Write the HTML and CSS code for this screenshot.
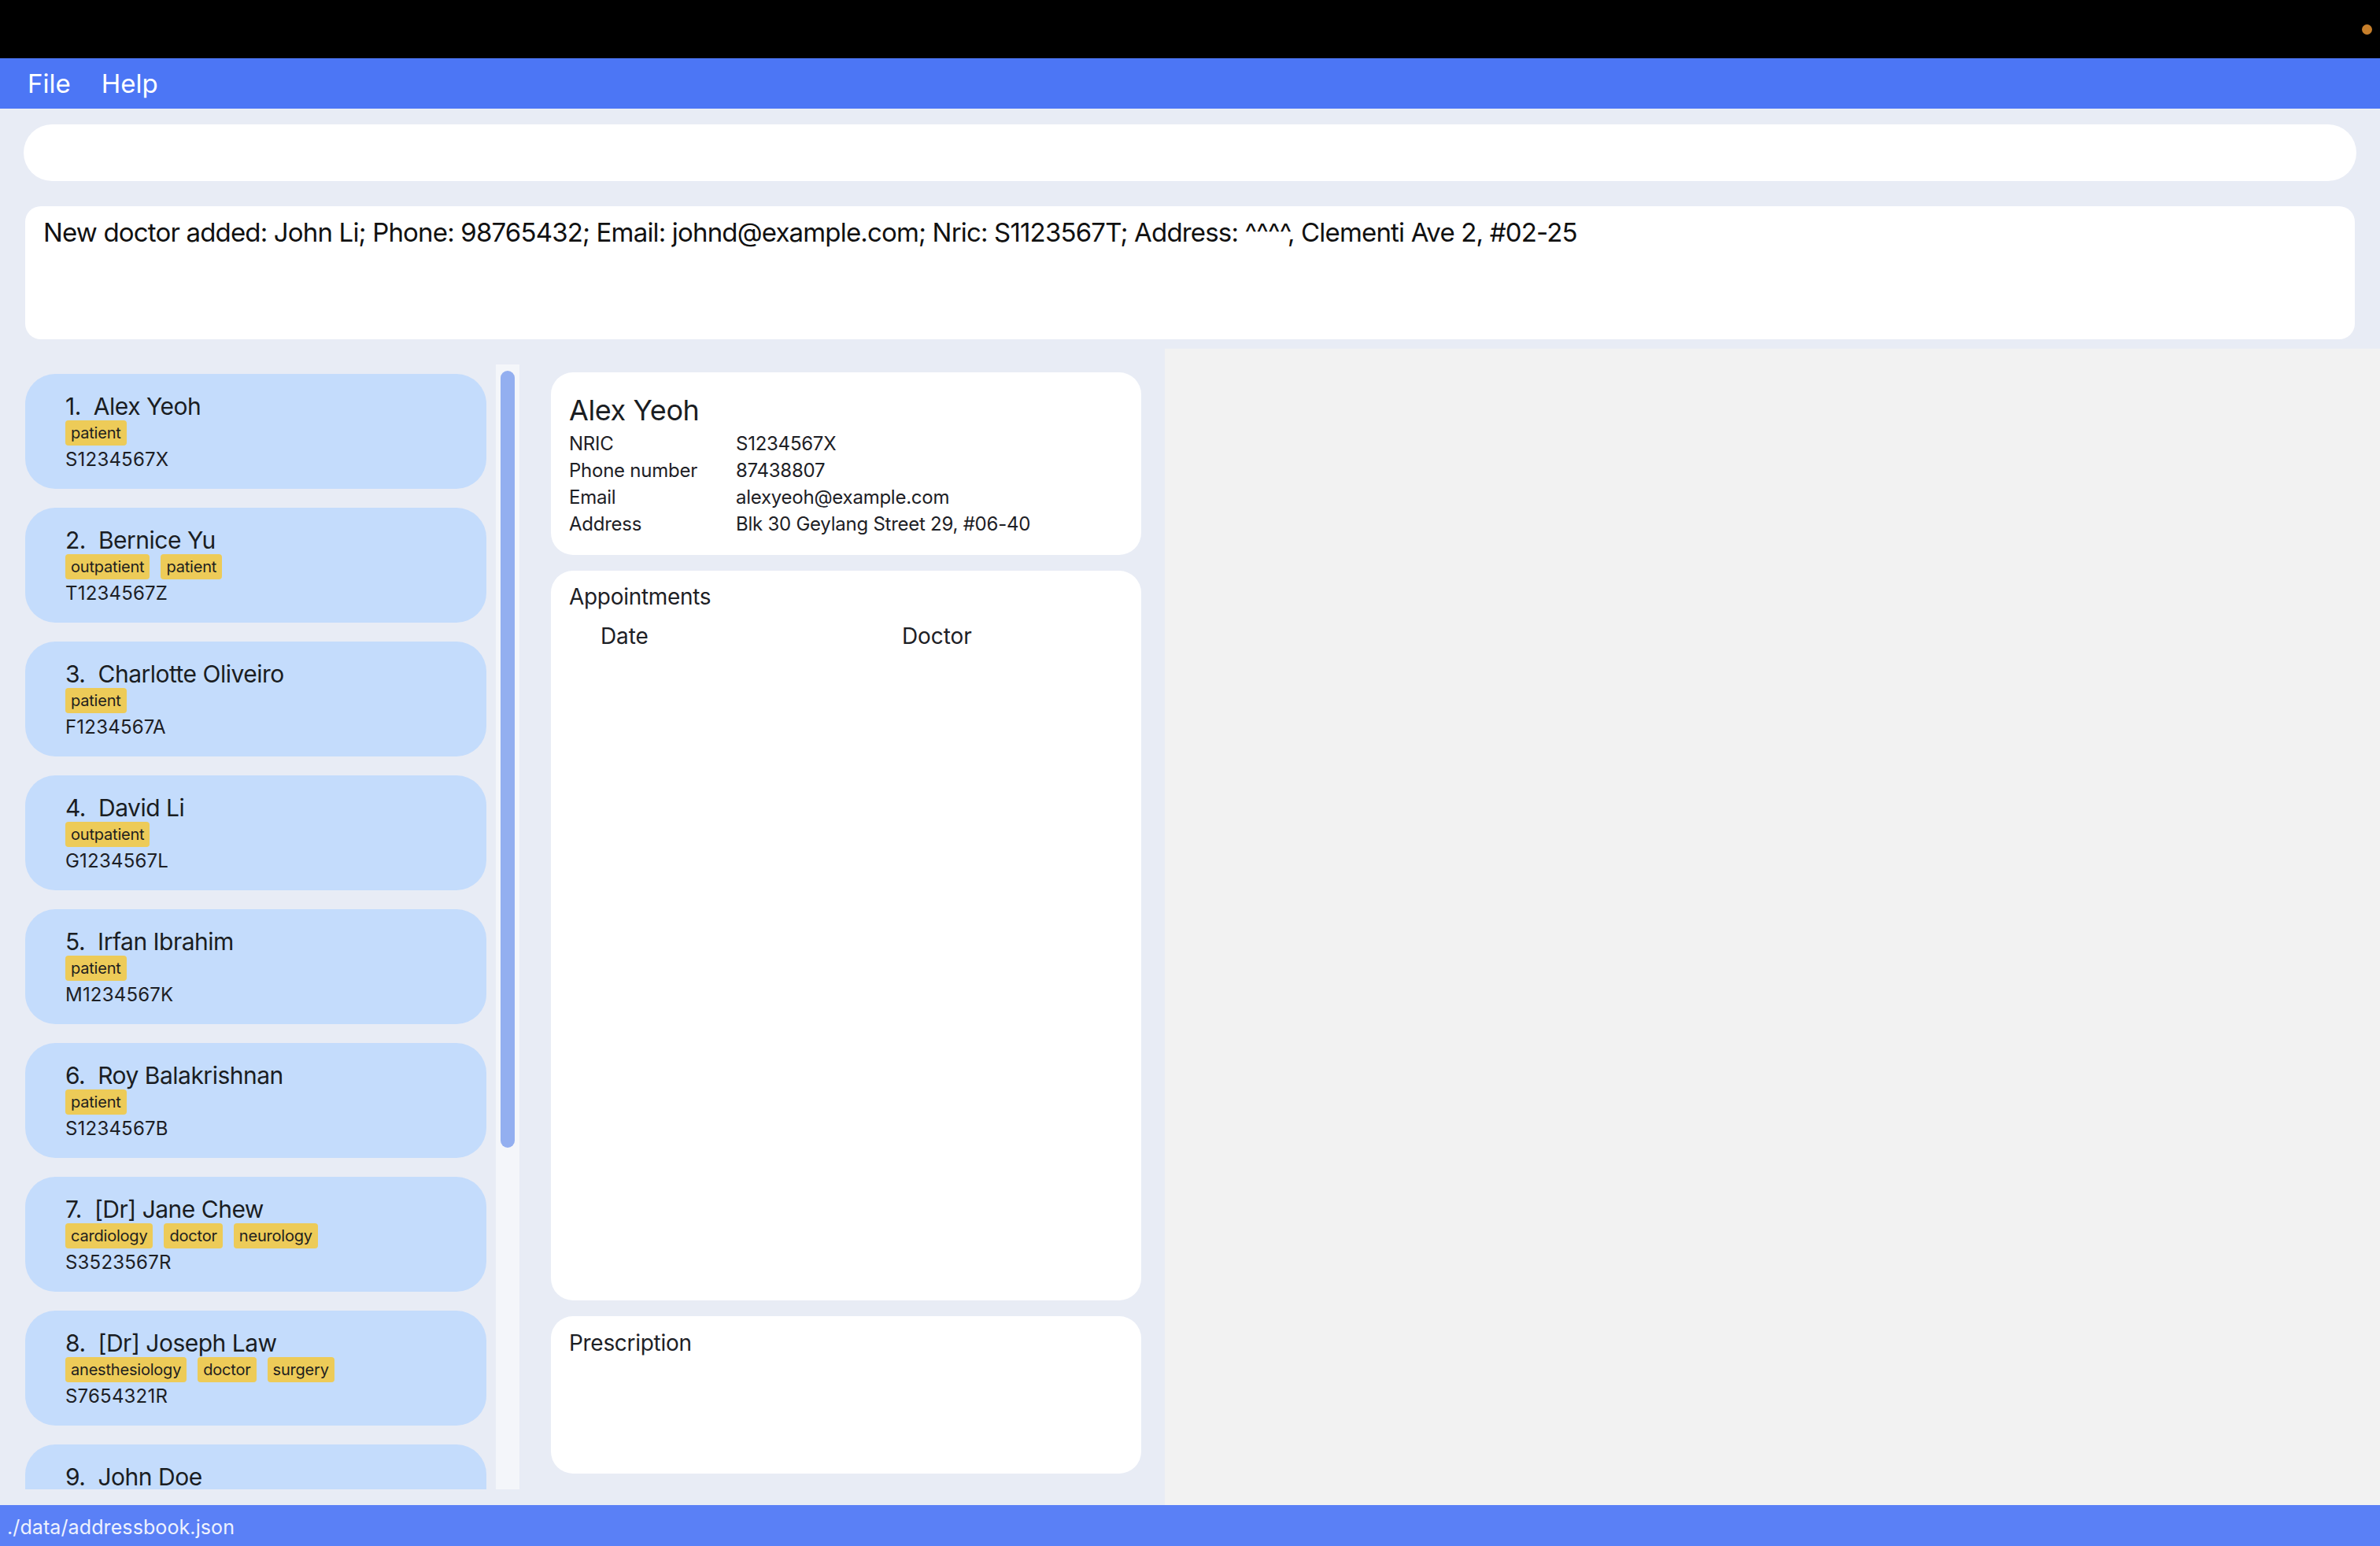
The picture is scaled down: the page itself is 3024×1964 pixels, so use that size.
FILE: index.html
```html
<!DOCTYPE html>
<html lang="en">
<head>
<meta charset="utf-8">
<title>Clinic address book</title>
<link rel="stylesheet" href="styles.css">
</head>
<body>
<div class="app">
  <div class="titlebar"><span class="dot"></span></div>
  <nav class="menubar">
    <span class="menu-item">File</span>
    <span class="menu-item">Help</span>
  </nav>
  <main class="main">
    <section class="top">
      <div class="command-box"></div>
      <div class="result-box">New doctor added: John Li; Phone: 98765432; Email: johnd@example.com; Nric: S1123567T; Address: ^^^^, Clementi Ave 2, #02-25</div>
    </section>
    <section class="bottom">
      <div class="left">
        <div class="list-wrap">
          <div class="list-viewport">
            <div class="card">
              <div class="name"><span class="idx">1.</span><span>Alex Yeoh</span></div>
              <div class="tags"><span class="tag">patient</span></div>
              <div class="nric">S1234567X</div>
            </div>
            <div class="card">
              <div class="name"><span class="idx">2.</span><span>Bernice Yu</span></div>
              <div class="tags"><span class="tag">outpatient</span><span class="tag">patient</span></div>
              <div class="nric">T1234567Z</div>
            </div>
            <div class="card">
              <div class="name"><span class="idx">3.</span><span>Charlotte Oliveiro</span></div>
              <div class="tags"><span class="tag">patient</span></div>
              <div class="nric">F1234567A</div>
            </div>
            <div class="card">
              <div class="name"><span class="idx">4.</span><span>David Li</span></div>
              <div class="tags"><span class="tag">outpatient</span></div>
              <div class="nric">G1234567L</div>
            </div>
            <div class="card">
              <div class="name"><span class="idx">5.</span><span>Irfan Ibrahim</span></div>
              <div class="tags"><span class="tag">patient</span></div>
              <div class="nric">M1234567K</div>
            </div>
            <div class="card">
              <div class="name"><span class="idx">6.</span><span>Roy Balakrishnan</span></div>
              <div class="tags"><span class="tag">patient</span></div>
              <div class="nric">S1234567B</div>
            </div>
            <div class="card">
              <div class="name"><span class="idx">7.</span><span>[Dr] Jane Chew</span></div>
              <div class="tags"><span class="tag">cardiology</span><span class="tag">doctor</span><span class="tag">neurology</span></div>
              <div class="nric">S3523567R</div>
            </div>
            <div class="card">
              <div class="name"><span class="idx">8.</span><span>[Dr] Joseph Law</span></div>
              <div class="tags"><span class="tag">anesthesiology</span><span class="tag">doctor</span><span class="tag">surgery</span></div>
              <div class="nric">S7654321R</div>
            </div>
            <div class="card">
              <div class="name"><span class="idx">9.</span><span>John Doe</span></div>
            </div>
          </div>
          <div class="scroll-track"><div class="scroll-thumb"></div></div>
        </div>
        <div class="detail">
          <div class="panel info">
            <div class="detail-name">Alex Yeoh</div>
            <div class="rows">
              <span class="label">NRIC</span><span class="value">S1234567X</span>
              <span class="label">Phone number</span><span class="value">87438807</span>
              <span class="label">Email</span><span class="value">alexyeoh@example.com</span>
              <span class="label">Address</span><span class="value">Blk 30 Geylang Street 29, #06-40</span>
            </div>
          </div>
          <div class="panel appointments">
            <div class="panel-title">Appointments</div>
            <div class="appt-head"><span class="col-date">Date</span><span class="col-doctor">Doctor</span></div>
          </div>
          <div class="panel prescription">
            <div class="panel-title">Prescription</div>
          </div>
        </div>
      </div>
      <div class="right"></div>
    </section>
  </main>
  <footer class="statusbar">./data/addressbook.json</footer>
</div>
</body>
</html>
```
FILE: styles.css
```css
* { box-sizing: border-box; }
html, body { margin: 0; padding: 0; }
body {
  font-family: Inter, "Noto Sans", "Liberation Sans", sans-serif;
  color: #1d2025;
  width: 3024px;
  height: 1964px;
  overflow: hidden;
}
.app {
  display: flex;
  flex-direction: column;
  height: 1964px;
}
.titlebar {
  height: 74px;
  background: #000;
  display: flex;
  justify-content: flex-end;
  align-items: center;
  padding-right: 10px;
}
.dot {
  width: 13px;
  height: 13px;
  border-radius: 50%;
  background: #c77f2b;
}
.menubar {
  height: 64px;
  background: #4c76f5;
  display: flex;
  padding-left: 35px;
  gap: 39px;
}
.menu-item {
  color: #fff;
  font-size: 33px;
  line-height: 64px;
  letter-spacing: 0;
}
.main {
  flex: 1;
  display: flex;
  flex-direction: column;
  background: #e8ecf5;
  min-height: 0;
}
.top {
  padding: 20px 30px 12px 30px;
  display: flex;
  flex-direction: column;
  gap: 32px;
}
.command-box {
  height: 72px;
  background: #fff;
  border-radius: 36px;
}
.result-box {
  height: 169px;
  margin: 0 2px;
  background: #fff;
  border-radius: 20px;
  padding: 13px 23px;
  font-size: 33px;
  line-height: 40px;
  letter-spacing: -0.83px;
  color: #111;
}
.bottom {
  flex: 1;
  display: flex;
  min-height: 0;
}
.left {
  width: 1480px;
  display: flex;
  padding-left: 32px;
}
.right {
  flex: 1;
  background: #f2f2f2;
}
.list-wrap {
  display: flex;
  gap: 12px;
  padding: 20px 0;
  height: 100%;
}
.list-viewport {
  width: 586px;
  height: 1429px;
  overflow: hidden;
  padding-top: 12px;
  display: flex;
  flex-direction: column;
  gap: 24px;
}
.card {
  flex: none;
  height: 146px;
  background: #c4dcfc;
  border-radius: 38px;
  padding: 23px 0 0 51px;
}
.name {
  display: flex;
  gap: 16px;
  font-size: 30px;
  line-height: 36px;
  letter-spacing: -0.5px;
  color: #1a1d22;
}
.tags {
  display: flex;
  gap: 14px;
  height: 32px;
}
.tag {
  background: #edcb58;
  border-radius: 4px;
  padding: 0 7px;
  font-size: 20px;
  line-height: 32px;
  color: #1e1e1e;
  letter-spacing: -0.2px;
}
.nric {
  margin-top: 3px;
  font-size: 24px;
  line-height: 29px;
  letter-spacing: 0.2px;
  color: #1d2025;
}
.scroll-track {
  width: 30px;
  height: 1429px;
  background: #f4f6fa;
  padding: 8px 6px 0 6px;
}
.scroll-thumb {
  height: 987px;
  background: #93aff0;
  border-radius: 10px;
}
.detail {
  margin-left: 40px;
  width: 750px;
  display: flex;
  flex-direction: column;
  gap: 20px;
  padding: 30px 0 40px 0;
}
.panel {
  background: #fff;
  border-radius: 28px;
  padding-left: 23px;
}
.info {
  height: 232px;
  padding-top: 27px;
}
.detail-name {
  font-size: 36px;
  line-height: 42px;
  letter-spacing: -0.4px;
  color: #1a1d22;
}
.rows {
  margin-top: 5px;
  display: grid;
  grid-template-columns: 212px 1fr;
  font-size: 24px;
  line-height: 34px;
  letter-spacing: -0.25px;
}
.appointments {
  flex: 1;
  padding-top: 16px;
}
.panel-title {
  font-size: 28px;
  line-height: 34px;
  letter-spacing: -0.3px;
}
.appt-head {
  margin-top: 16px;
  padding-left: 40px;
  display: flex;
  font-size: 28px;
  line-height: 34px;
  letter-spacing: -0.1px;
}
.col-date { width: 383px; }
.prescription {
  height: 200px;
  padding-top: 17px;
}
.statusbar {
  height: 52px;
  background: #5a80f6;
  color: #eef2fe;
  font-size: 25px;
  line-height: 52px;
  padding: 2px 0 0 9px;
  letter-spacing: 0.1px;
}
```
